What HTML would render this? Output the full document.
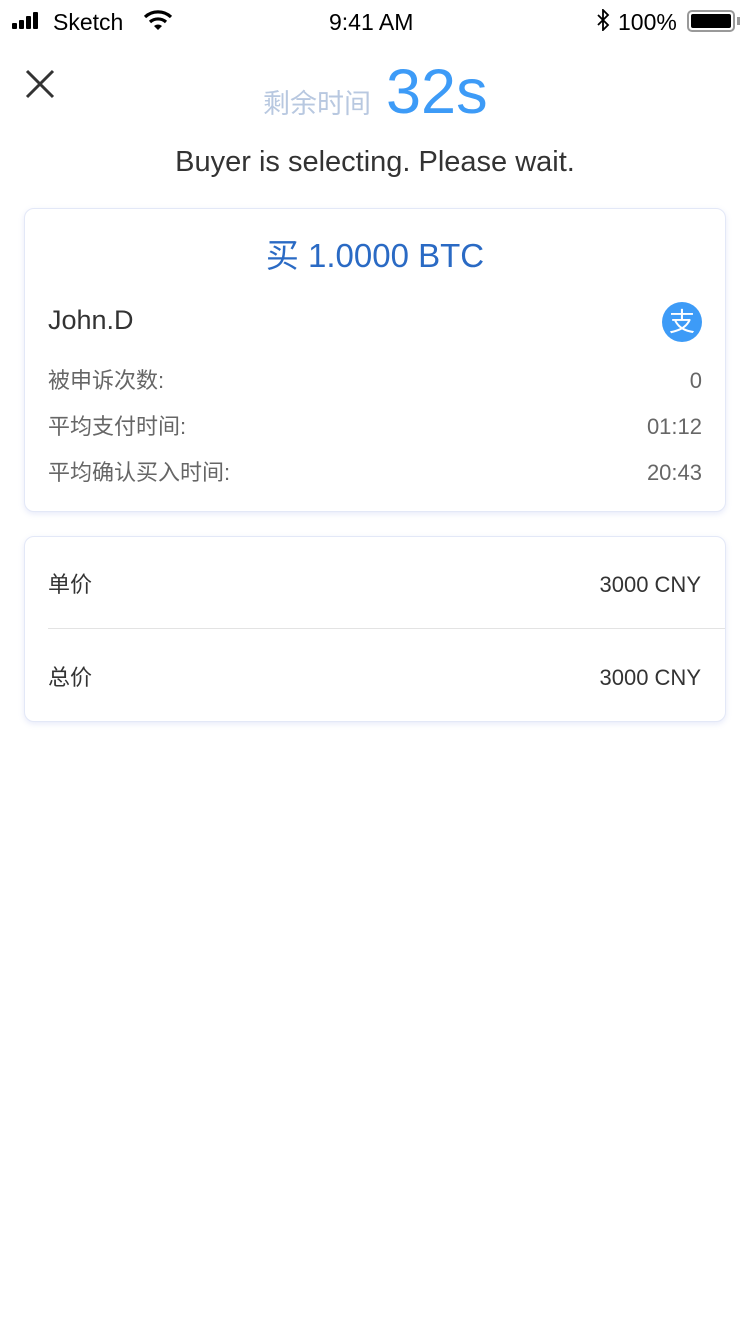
<!DOCTYPE html>
<html><head><meta charset="utf-8"><style>
*{margin:0;padding:0;box-sizing:border-box}
body{width:750px;height:1334px;background:#fff;position:relative;font-family:"Liberation Sans","Noto Sans CJK SC",sans-serif;overflow:hidden}
.a{position:absolute;white-space:nowrap}
.card{position:absolute;left:24px;width:702px;border:1px solid #e3e8f7;border-radius:10px;box-shadow:0 2px 6px rgba(120,140,220,0.18);background:#fff}
.l{font-size:22px;color:#666}
</style></head><body>
<div class="a" style="left:12px;top:12px">
<svg width="36" height="18"><rect x="0" y="11" width="5" height="6" rx="1"/><rect x="7" y="8" width="5" height="9" rx="1"/><rect x="14" y="4" width="5" height="13" rx="1"/><rect x="21" y="0" width="5" height="17" rx="1"/></svg></div>
<div class="a" style="left:53px;top:9px;font-size:23px;color:#000">Sketch</div>
<svg class="a" style="left:143px;top:9px" width="30" height="22" viewBox="0 0 30 22"><path d="M2 8 A19 19 0 0 1 28 8" stroke="#000" stroke-width="3.2" fill="none"/><path d="M7 13 A12 12 0 0 1 23 13" stroke="#000" stroke-width="3.2" fill="none"/><path d="M11 17 L15 21 L19 17 A6 6 0 0 0 11 17Z" fill="#000"/></svg>
<div class="a" style="left:329px;top:9px;font-size:23px;color:#000">9:41 AM</div>
<svg class="a" style="left:596px;top:9px" width="14" height="22" viewBox="0 0 14 22"><path d="M2 6 L12 16 L7 21 L7 1 L12 6 L2 16" stroke="#000" stroke-width="1.8" fill="none"/></svg>
<div class="a" style="left:618px;top:9px;font-size:23px;color:#000">100%</div>
<div class="a" style="left:687px;top:10px;width:48px;height:22px;border:2px solid #999;border-radius:5px;padding:2px"><div style="background:#000;width:100%;height:100%;border-radius:2px"></div></div>
<div class="a" style="left:737px;top:17px;width:3px;height:8px;background:#999"></div>
<svg class="a" style="left:24px;top:68px" width="32" height="32"><path d="M3 3L29 29M29 3L3 29" stroke="#333" stroke-width="3"/></svg>
<div class="a" style="left:263px;top:82px;font-size:27px;color:#b8c8e0">剩余时间</div>
<div class="a" style="left:386px;top:56px;font-size:63px;color:#3d9bf7">32s</div>
<div class="a" style="left:0;width:750px;text-align:center;top:146px;font-size:29px;color:#333">Buyer is selecting. Please wait.</div>
<div class="card" style="top:208px;height:304px">
<div class="a" style="left:0;width:700px;text-align:center;top:20px;font-size:33px;color:#2a6ac4">买 1.0000 BTC</div>
<div class="a" style="left:23px;top:96px;font-size:27px;color:#333">John.D</div>
<div class="a" style="left:637px;top:93px;width:40px;height:40px;border-radius:50%;background:#3d9bf7;color:#fff;font-size:26px;text-align:center;line-height:40px">支</div>
<div class="a l" style="left:23px;top:154px">被申诉次数:</div><div class="a l" style="right:23px;top:159px">0</div>
<div class="a l" style="left:23px;top:200px">平均支付时间:</div><div class="a l" style="right:23px;top:205px">01:12</div>
<div class="a l" style="left:23px;top:246px">平均确认买入时间:</div><div class="a l" style="right:23px;top:251px">20:43</div>
</div>
<div class="card" style="top:536px;height:186px">
<div class="a" style="left:23px;top:30px;font-size:22px;color:#333">单价</div><div class="a" style="right:24px;top:35px;font-size:22px;color:#333">3000 CNY</div>
<div class="a" style="left:23px;right:0;top:91px;height:1px;background:#e3e3e3"></div>
<div class="a" style="left:23px;top:123px;font-size:22px;color:#333">总价</div><div class="a" style="right:24px;top:128px;font-size:22px;color:#333">3000 CNY</div>
</div>
</body></html>
